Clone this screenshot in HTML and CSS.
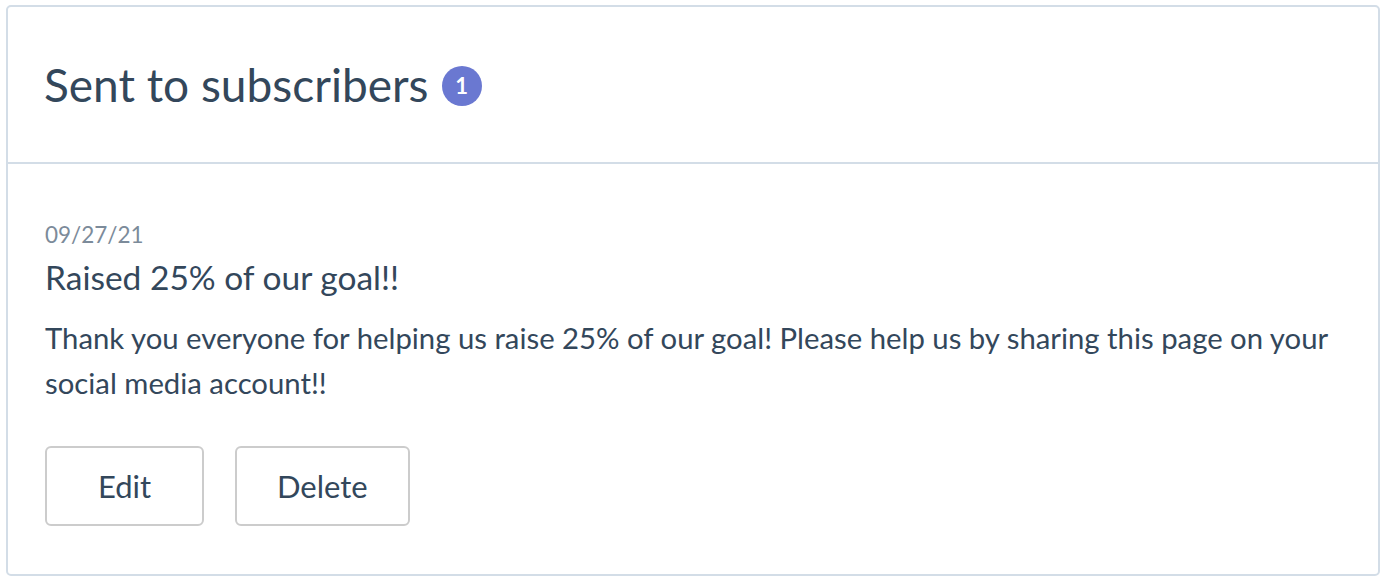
FILE: index.html
```html
<!DOCTYPE html>
<html lang="en">
<head>
    <meta charset="UTF-8">
    <meta name="viewport" content="width=device-width, initial-scale=1.0">
    <title>Sent to subscribers</title>
    <link rel="stylesheet" href="styles.css">
</head>
<body>

    <!-- Updates card -->
    <div class="card">
        <div class="card-header">
            <h2 class="card-title">Sent to subscribers</h2>
            <span class="badge">1</span>
        </div>

        <div class="card-body">
            <div class="update">
                <p class="update-date">09/27/21</p>
                <h3 class="update-title">Raised 25% of our goal!!</h3>
                <p class="update-text">Thank you everyone for helping us raise 25% of our goal! Please help us by sharing this page on your social media account!!</p>
                <div class="actions">
                    <button class="btn">Edit</button>
                    <button class="btn">Delete</button>
                </div>
            </div>
        </div>
    </div>

</body>
</html>
```

FILE: styles.css
```css
body {
    font-family: Lato, "Open Sans", sans-serif;
    margin: 0;
    padding: 5px 6px 0 6px;
    background-color: #ffffff;
    color: #33475b;
}

.card {
    border: 2px solid #d3dde7;
    border-radius: 5px;
    background: white;
}

.card-header {
    display: flex;
    align-items: center;
    gap: 13px;
    height: 155px;
    padding: 0 36px;
    border-bottom: 2px solid #d3dde7;
}

.card-title {
    margin: 0;
    font-size: 46px;
    font-weight: 400;
    line-height: 1;
}

.badge {
    display: flex;
    align-items: center;
    justify-content: center;
    width: 40px;
    height: 40px;
    border-radius: 50%;
    background-color: #6a78d1;
    color: white;
    font-size: 22px;
    font-weight: 700;
    margin-top: 2px;
}

.card-body {
    padding: 57px 36px 48px 37px;
}

.update-date {
    margin: 0;
    font-size: 22.5px;
    line-height: 28px;
    color: #7c8b9a;
}

.update-title {
    margin: 8px 0 0 0;
    font-size: 33.5px;
    font-weight: 400;
    line-height: 40px;
}

.update-text {
    margin: 18px 0 0 0;
    font-size: 29.3px;
    line-height: 45px;
}

.actions {
    display: flex;
    gap: 31px;
    margin-top: 41px;
}

.btn {
    min-width: 159px;
    height: 80px;
    padding: 0 40px;
    font-family: inherit;
    font-size: 31px;
    color: #33475b;
    background: white;
    border: 2px solid #cccccc;
    border-radius: 6px;
    cursor: pointer;
}
```
